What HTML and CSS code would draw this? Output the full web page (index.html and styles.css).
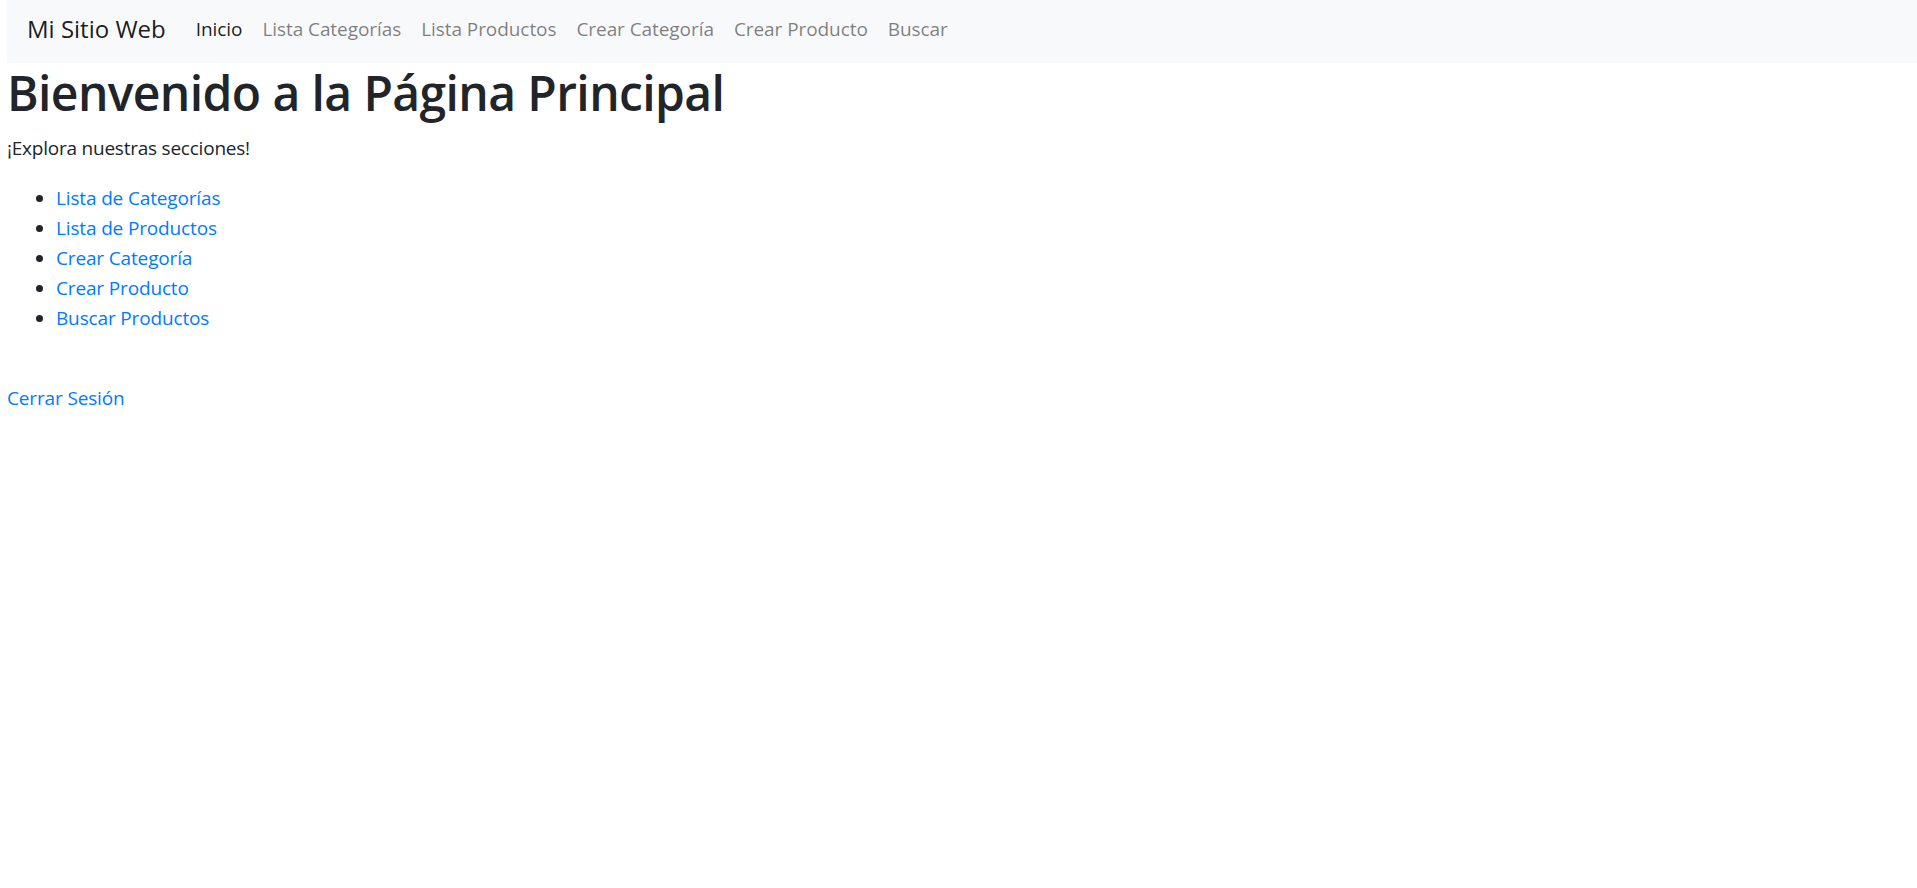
FILE: index.html
```html
<!DOCTYPE html>
<html lang="es">
<head>
<meta charset="utf-8">
<title>Mi Sitio Web</title>
<link rel="stylesheet" href="styles.css">
</head>
<body>
<nav class="navbar">
  <a class="brand" href="#">Mi Sitio Web</a>
  <ul class="nav">
    <li><a class="nav-link active" href="#">Inicio</a></li>
    <li><a class="nav-link" href="#">Lista Categorías</a></li>
    <li><a class="nav-link" href="#">Lista Productos</a></li>
    <li><a class="nav-link" href="#">Crear Categoría</a></li>
    <li><a class="nav-link" href="#">Crear Producto</a></li>
    <li><a class="nav-link" href="#">Buscar</a></li>
  </ul>
</nav>
<h1 class="title">Bienvenido a la Página Principal</h1>
<p class="lead-text">¡Explora nuestras secciones!</p>
<ul class="sections">
  <li><a href="#">Lista de Categorías</a></li>
  <li><a href="#">Lista de Productos</a></li>
  <li><a href="#">Crear Categoría</a></li>
  <li><a href="#">Crear Producto</a></li>
  <li><a href="#">Buscar Productos</a></li>
</ul>
<div class="logout"><a href="#">Cerrar Sesión</a></div>
</body>
</html>
```

FILE: styles.css
```css
html, body {
  margin: 0;
  padding: 0;
}
body {
  padding-left: 7px;
  font-family: "Open Sans", "Noto Sans", sans-serif;
  font-size: 19px;
  line-height: 30px;
  letter-spacing: -0.15px;
  color: #212529;
  background: #fff;
}
a {
  color: #007bff;
  text-decoration: none;
}
.navbar {
  box-sizing: border-box;
  display: flex;
  align-items: center;
  height: 63px;
  padding: 0 20px 6px;
  background: #f8f9fa;
}
.brand {
  font-size: 24px;
  line-height: 37px;
  letter-spacing: 0;
  color: rgba(0, 0, 0, 0.9);
  margin-right: 20px;
}
.nav {
  display: flex;
  list-style: none;
  margin: 0;
  padding: 0;
}
.nav-link {
  display: block;
  padding: 0 10px;
  letter-spacing: -0.07px;
  color: rgba(0, 0, 0, 0.5);
}
.nav-link.active {
  color: rgba(0, 0, 0, 0.9);
}
.title {
  margin: 0 0 10px;
  font-size: 48px;
  line-height: 60px;
  font-weight: 600;
  letter-spacing: -0.6px;
}
.lead-text {
  margin: 0 0 20px;
  letter-spacing: -0.23px;
}
.sections {
  margin: 0 0 20px;
  padding-left: 49px;
}
.logout {
  padding-top: 30px;
}
```
